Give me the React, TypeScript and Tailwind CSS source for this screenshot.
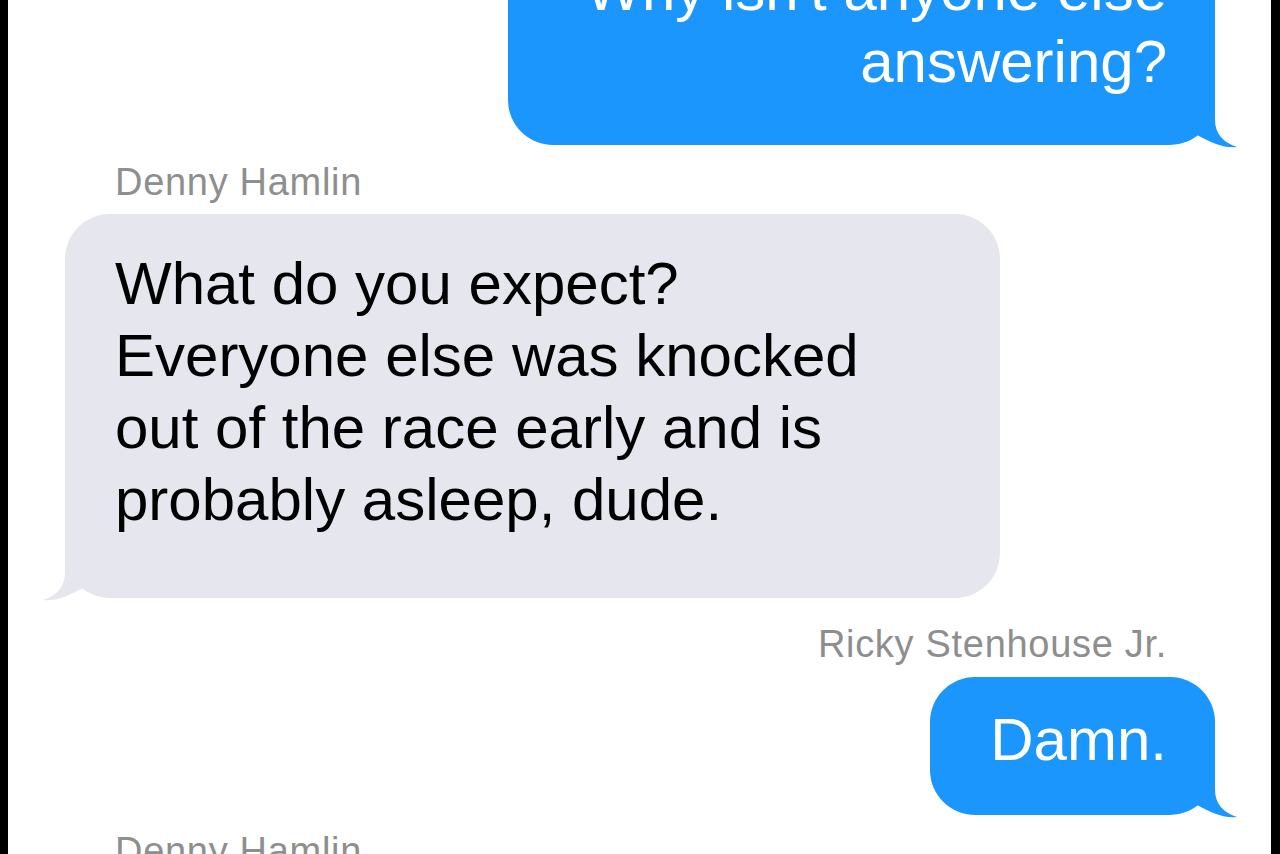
import React from 'react';

const BLUE = '#1b96fd';
const GRAY = '#e5e6ee';

function Tail({ color, side }: { color: string; side: 'left' | 'right' }) {
  const pos = side === 'right' ? 'right-[-25px] bottom-[-5px]' : 'left-[-25px] bottom-[-5px] -scale-x-100';
  return (
    <svg className={`absolute ${pos}`} width="70" height="60" viewBox="0 0 70 60">
      <path d="M0 0 H45 V30 C45 44 54 53 67 57 C56 58.5 42 54 24 43 L0 45 Z" fill={color} />
    </svg>
  );
}

function Label({ children, align }: { children: React.ReactNode; align: 'left' | 'right' }) {
  return (
    <div
      className={`h-[40px] text-[38px] leading-[40px] tracking-[0.7px] text-[#8e8e8e] whitespace-nowrap ${
        align === 'left' ? 'pl-[50px] self-start' : 'pr-[48px] self-end'
      }`}
    >
      {children}
    </div>
  );
}

export default function App() {
  return (
    <div className="h-[854px] w-full overflow-hidden bg-black pl-[8px] pr-[9px] font-['Liberation_Sans',Arial,sans-serif]">
      <div className="h-full bg-white overflow-hidden">
        <div className="flex flex-col pl-[57px] pr-[56px]">
          {/* outgoing */}
          <div
            className="relative self-end -mt-[81px] w-[707px] rounded-[45px] pt-[35px] pb-[47px] pr-[48px] text-right text-white text-[60px] leading-[72px]"
            style={{ backgroundColor: BLUE }}
          >
            Why isn't anyone else
            <br />
            answering?
            <Tail color={BLUE} side="right" />
          </div>

          <div className="mt-[17px] flex flex-col">
            <Label align="left">Denny Hamlin</Label>
          </div>

          <div
            className="relative self-start mt-[12px] w-[935px] rounded-[45px] pt-[34px] pb-[62px] pl-[50px] text-black text-[60px] leading-[72px]"
            style={{ backgroundColor: GRAY }}
          >
            What do you expect?
            <br />
            Everyone else was knocked
            <br />
            out of the race early and is
            <br />
            probably asleep, dude.
            <Tail color={GRAY} side="left" />
          </div>

          <div className="mt-[26px] flex flex-col">
            <Label align="right">Ricky Stenhouse Jr.</Label>
          </div>

          <div
            className="relative self-end mt-[13px] w-[285px] rounded-[45px] pt-[27px] pb-[39px] pr-[48px] text-right text-white text-[60px] leading-[72px]"
            style={{ backgroundColor: BLUE }}
          >
            Damn.
            <Tail color={BLUE} side="right" />
          </div>

          <div className="mt-[16px] flex flex-col">
            <Label align="left">Denny Hamlin</Label>
          </div>
        </div>
      </div>
    </div>
  );
}
